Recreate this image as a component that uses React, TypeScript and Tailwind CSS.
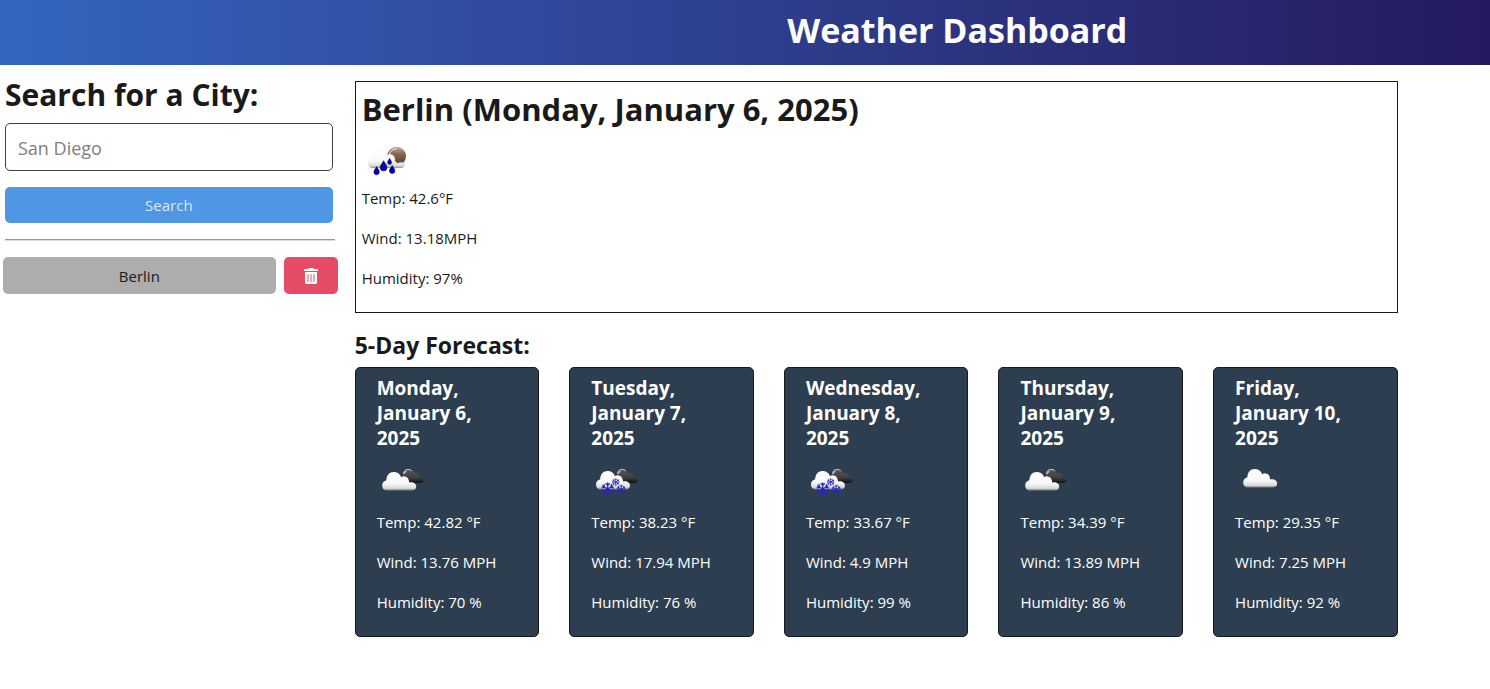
import { useState } from "react";
import { FaTrashAlt } from "react-icons/fa";

type Sky = "rain-night" | "broken" | "snow" | "cloudy";

interface Day {
  date: string;
  sky: Sky;
  temp: string;
  wind: string;
  humidity: string;
}

const days: Day[] = [
  { date: "Monday, January 6, 2025", sky: "broken", temp: "42.82", wind: "13.76", humidity: "70" },
  { date: "Tuesday, January 7, 2025", sky: "snow", temp: "38.23", wind: "17.94", humidity: "76" },
  { date: "Wednesday, January 8, 2025", sky: "snow", temp: "33.67", wind: "4.9", humidity: "99" },
  { date: "Thursday, January 9, 2025", sky: "broken", temp: "34.39", wind: "13.89", humidity: "86" },
  { date: "Friday, January 10, 2025", sky: "cloudy", temp: "29.35", wind: "7.25", humidity: "92" },
];

const cloudPath =
  "M5 18.5 C2 18.5 0 16.4 0 13.4 C0 10.7 1.8 8.8 4.2 8.2 C4.2 3.4 7.2 0 11.6 0 C15.2 0 18 2.2 18.9 5.2 C20 4.5 21.2 4.2 22.4 4.4 C25.2 4.7 27 7 27 10.4 C30.8 9.6 34 11.4 34 14.6 C34 17.2 32 18.5 29.5 18.5 Z";

function Flake({ x, y, r }: { x: number; y: number; r: number }) {
  return (
    <g transform={`translate(${x} ${y})`} stroke="#2626bd" strokeWidth="1.3" strokeLinecap="round" fill="none">
      {[0, 60, 120, 180, 240, 300].map((angle) => (
        <path
          key={angle}
          transform={`rotate(${angle}) scale(${r / 6})`}
          d="M0 0V-6M-1.8 -5.4L0 -3.6L1.8 -5.4"
        />
      ))}
    </g>
  );
}

function Drop({ x, y, s }: { x: number; y: number; s: number }) {
  return (
    <path
      transform={`translate(${x} ${y}) scale(${s})`}
      d="M0 -5C1 -2.6 3.2 -0.8 3.2 1.4A3.2 3.2 0 0 1 -3.2 1.4C-3.2 -0.8 -1 -2.6 0 -5Z"
      fill="#0000b4"
      stroke="#00004a"
      strokeWidth="0.6"
    />
  );
}

function WeatherIcon({ sky, id }: { sky: Sky; id: string }) {
  const white = `url(#${id}-white)`;
  const dark = `url(#${id}-dark)`;
  return (
    <svg viewBox="0 0 50 50" className="block size-[50px]" aria-hidden="true">
      <defs>
        <linearGradient id={`${id}-white`} x1="0" y1="0" x2="0" y2="1">
          <stop offset="0" stopColor="#ffffff" />
          <stop offset="0.6" stopColor="#f9f9f9" />
          <stop offset="0.88" stopColor="#dadada" />
          <stop offset="1" stopColor="#7c7c7c" />
        </linearGradient>
        <linearGradient id={`${id}-dark`} x1="0" y1="0" x2="0" y2="1">
          <stop offset="0" stopColor="#585858" />
          <stop offset="0.6" stopColor="#414141" />
          <stop offset="1" stopColor="#111111" />
        </linearGradient>
        <linearGradient id={`${id}-moon`} x1="0" y1="0" x2="0" y2="1">
          <stop offset="0" stopColor="#c6aa99" />
          <stop offset="0.4" stopColor="#866454" />
          <stop offset="1" stopColor="#543d30" />
        </linearGradient>
      </defs>
      {(sky === "broken" || sky === "snow") && (
        <g>
          <path
            d="M26 23V19C26 15.8 28 14 31 14C34 14 36 15.6 37 18C40 17.2 42.5 19 43 22C45.5 22 47 23.6 46.5 25.5C46.2 27.3 44.5 28 42 28H32Z"
            fill={dark}
          />
          <path d="M26.4 19C26.8 15.8 28.6 14.4 31 14.4C32.6 14.4 33.8 14.9 34.8 15.8" fill="none" stroke="#c9c9c9" strokeWidth="1" />
          <path d="M27 19C27.6 17.4 28.4 16.7 29.6 16.2" fill="none" stroke="#b0b0b0" strokeWidth="1.4" />
        </g>
      )}
      {sky === "broken" && <path transform="translate(5.2 17)" d={cloudPath} fill={white} />}
      {sky === "snow" && (
        <g>
          <path transform="translate(5 16)" d={cloudPath} fill={white} />
          <Flake x={16.7} y={34} r={6} />
          <Flake x={24.7} y={27} r={3.4} />
          <Flake x={30.2} y={34.3} r={4.2} />
        </g>
      )}
      {sky === "cloudy" && <path transform="translate(8.2 14)" d={cloudPath} fill={white} />}
      {sky === "rain-night" && (
        <g>
          <circle cx="34.6" cy="20.2" r="9.4" fill={`url(#${id}-moon)`} />
          <path d="M27 20C27.6 15.6 30.8 12.8 35 12.6" fill="none" stroke="#f3ebe6" strokeWidth="1" />
          <path
            d="M11 32C8 32 6 30 6 27.2C6 24.5 7.8 22.7 10.2 22C10.6 17.4 13.5 14.4 17.8 14.4C21.2 14.4 23.8 16.3 24.8 19.2C27.6 17.2 32.2 18.6 32.8 22.6C33 23.7 33 24.5 32.7 25.6C34.3 25.8 34.8 26.7 35.2 27.6C38 26 42.8 26.3 43 28.8C43.2 30.8 41 32 38.5 32Z"
            fill={white}
            stroke="#ececec"
            strokeWidth="0.4"
          />
          <Drop x={14.6} y={34.8} s={0.85} />
          <Drop x={21.6} y={30} s={1.05} />
          <Drop x={27.6} y={25.6} s={0.65} />
          <Drop x={30.2} y={33.6} s={0.85} />
        </g>
      )}
    </svg>
  );
}

function ForecastCard({ day, id }: { day: Day; id: string }) {
  const [weekday, monthDay, year] = day.date.split(", ");
  return (
    <article className="rounded-[5px] border border-[#1a1a1a] bg-[#2d3e50] pt-2 pr-5 pb-[22px] pl-[21px] text-white">
      <h4 className="mb-1 text-[19px] leading-[25px] font-bold">
        {weekday},
        <br />
        {monthDay},
        <br />
        {year}
      </h4>
      <WeatherIcon sky={day.sky} id={id} />
      <div className="mt-[5px] flex flex-col gap-4 whitespace-nowrap">
        <p>Temp: {day.temp} °F</p>
        <p>Wind: {day.wind} MPH</p>
        <p>Humidity: {day.humidity} %</p>
      </div>
    </article>
  );
}

export default function App() {
  const [city, setCity] = useState("");

  return (
    <div className="min-h-screen bg-white font-['Open_Sans','Noto_Sans',sans-serif] text-[15px] leading-6 text-[#1a1a1a]">
      <header className="bg-linear-to-r from-[#3465bf] to-[#241a60] pt-1.5 pb-[11px] pl-[28.5%] text-center text-white">
        <h1 className="text-[34px] leading-[48px] font-bold">Weather Dashboard</h1>
      </header>

      <div className="flex items-start">
        <aside className="w-[23%] shrink-0 pt-[11px] pr-[5px] pl-[3px]">
          <form className="pr-[5px] pl-0.5" onSubmit={(e) => e.preventDefault()}>
            <label htmlFor="city" className="mb-[9px] block text-[30px] leading-[38px] font-bold whitespace-nowrap">
              Search for a City:
            </label>
            <input
              id="city"
              type="text"
              placeholder="San Diego"
              value={city}
              onChange={(e) => setCity(e.target.value)}
              className="block h-12 w-full rounded-[5px] border border-[#404040] bg-white px-3 pt-0.5 text-lg placeholder:text-[#808080]"
            />
            <button type="submit" className="mt-4 block h-9 w-full rounded-[5px] bg-[#4f97e5] text-[#dbe9f5]">
              Search
            </button>
          </form>
          <hr className="my-4 mr-[3px] ml-0.5 border-t border-b border-t-[#9a9a9a] border-b-[#dcdcdc]" />
          <div className="flex gap-2">
            <button type="button" className="h-[37px] flex-1 rounded-[5px] bg-[#adadad]">
              Berlin
            </button>
            <button
              type="button"
              aria-label="Delete Berlin"
              className="flex h-[37px] w-[54px] items-center justify-center rounded-[5px] bg-[#e64c66] text-base text-white"
            >
              <FaTrashAlt />
            </button>
          </div>
        </aside>

        <main className="ml-3 w-[70%] pt-4">
          <section className="border border-[#1a1a1a] px-1.5 pt-2 pb-[22px]">
            <h2 className="mb-2 text-[31px] leading-[38px] font-bold">Berlin (Monday, January 6, 2025)</h2>
            <WeatherIcon sky="rain-night" id="today" />
            <div className="flex flex-col gap-4">
              <p>Temp: 42.6°F</p>
              <p>Wind: 13.18MPH</p>
              <p>Humidity: 97%</p>
            </div>
          </section>

          <section className="pt-[17px]">
            <h3 className="mb-[7px] text-[23px] leading-[30px] font-bold">5-Day Forecast:</h3>
            <div className="grid grid-cols-5 gap-[30px]">
              {days.map((day, i) => (
                <ForecastCard key={day.date} day={day} id={`day${i}`} />
              ))}
            </div>
          </section>
        </main>
      </div>
    </div>
  );
}
